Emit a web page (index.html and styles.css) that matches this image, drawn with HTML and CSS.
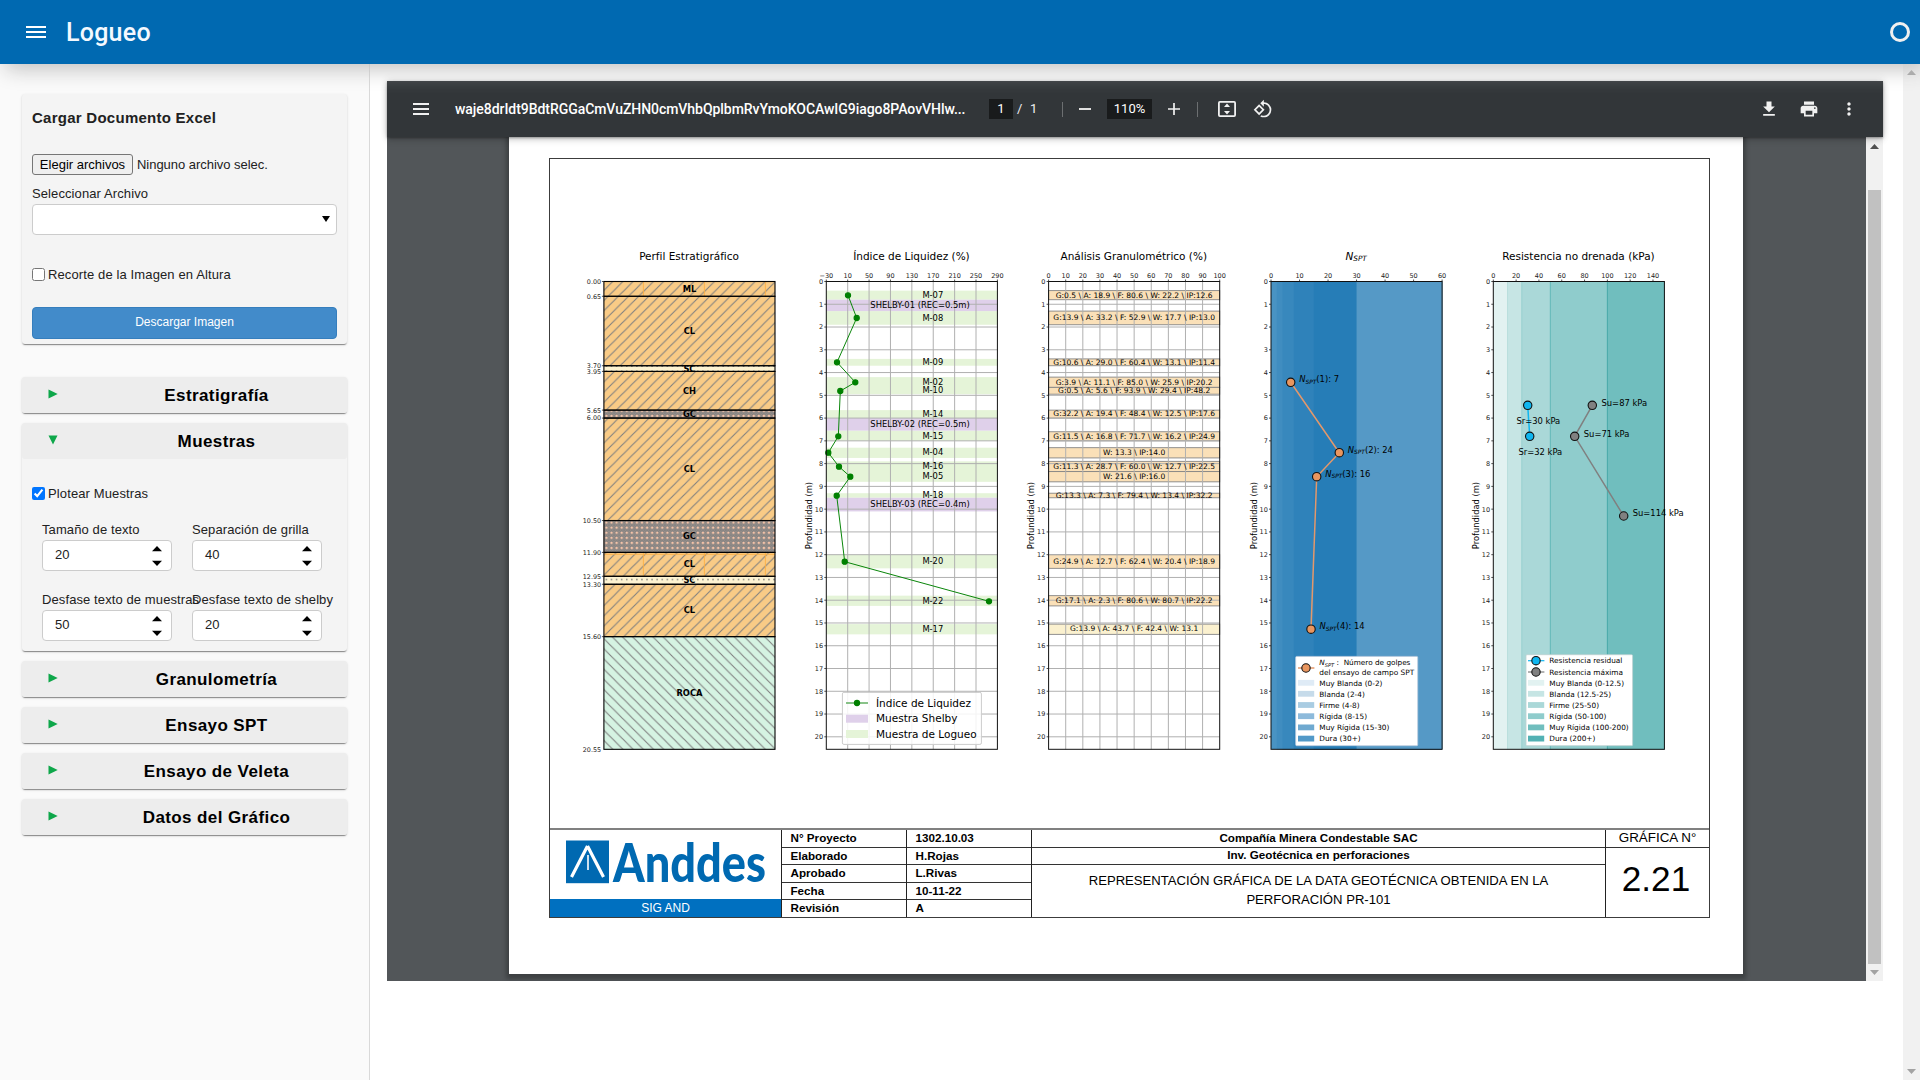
FILE: index.html
```html
<!DOCTYPE html>
<html lang="es">
<head>
<meta charset="utf-8">
<title>Logueo</title>
<link rel="stylesheet" href="styles.css">
</head>
<body>
<header class="topbar">
  <svg class="menu" width="20" height="12" viewBox="0 0 20 12"><path d="M0 1h20M0 6h20M0 11h20" stroke="#fff" stroke-width="2"/></svg>
  <h1 class="brand">Logueo</h1>
  <span class="busy"></span>
</header>
<div class="layout">
  <aside class="sidebar">
    <section class="card upload">
      <h2 class="card-title">Cargar Documento Excel</h2>
      <div class="file"><button class="file-btn">Elegir archivos</button><span>Ninguno archivo selec.</span></div>
      <label class="label">Seleccionar Archivo</label>
      <div class="select"><svg width="8" height="6" viewBox="0 0 8 6"><path d="M0 0h8L4 6z"/></svg></div>
      <label class="check"><input type="checkbox">Recorte de la Imagen en Altura</label>
      <button class="download">Descargar Imagen</button>
    </section>
    <section class="card fold"><div class="fold-head"><svg class="tri" width="10" height="10" viewBox="0 0 10 10"><path d="M.5.5 9.7 5 .5 9.5z"/></svg><h3>Estratigrafía</h3></div></section>
    <section class="card fold">
      <div class="fold-head"><svg class="tri" width="10" height="10" viewBox="0 0 10 10"><path d="M.5.5h9L5 9.5z"/></svg><h3>Muestras</h3></div>
      <div class="fold-body">
        <label class="check"><input type="checkbox" checked>Plotear Muestras</label>
        <div class="fields">
          <div class="field"><label class="label">Tamaño de texto</label><div class="num">20<svg width="10" height="20" viewBox="0 0 10 20"><path d="M0 5.3 5 0l5 5.3zM0 14.7h10L5 20z"/></svg></div></div>
          <div class="field"><label class="label">Separación de grilla</label><div class="num">40<svg width="10" height="20" viewBox="0 0 10 20"><path d="M0 5.3 5 0l5 5.3zM0 14.7h10L5 20z"/></svg></div></div>
          <div class="field"><label class="label">Desfase texto de muestras</label><div class="num">50<svg width="10" height="20" viewBox="0 0 10 20"><path d="M0 5.3 5 0l5 5.3zM0 14.7h10L5 20z"/></svg></div></div>
          <div class="field"><label class="label">Desfase texto de shelby</label><div class="num">20<svg width="10" height="20" viewBox="0 0 10 20"><path d="M0 5.3 5 0l5 5.3zM0 14.7h10L5 20z"/></svg></div></div>
        </div>
      </div>
    </section>
    <section class="card fold"><div class="fold-head"><svg class="tri" width="10" height="10" viewBox="0 0 10 10"><path d="M.5.5 9.7 5 .5 9.5z"/></svg><h3>Granulometría</h3></div></section>
    <section class="card fold"><div class="fold-head"><svg class="tri" width="10" height="10" viewBox="0 0 10 10"><path d="M.5.5 9.7 5 .5 9.5z"/></svg><h3>Ensayo SPT</h3></div></section>
    <section class="card fold"><div class="fold-head"><svg class="tri" width="10" height="10" viewBox="0 0 10 10"><path d="M.5.5 9.7 5 .5 9.5z"/></svg><h3>Ensayo de Veleta</h3></div></section>
    <section class="card fold"><div class="fold-head"><svg class="tri" width="10" height="10" viewBox="0 0 10 10"><path d="M.5.5 9.7 5 .5 9.5z"/></svg><h3>Datos del Gráfico</h3></div></section>
  </aside>
  <main class="main">
    <div class="viewer">
      <div class="toolbar">
        <svg class="t-menu" width="16" height="12" viewBox="0 0 16 12"><path d="M0 1h16M0 6h16M0 11h16" stroke="#f1f1f1" stroke-width="2"/></svg>
        <span class="filename">waje8drIdt9BdtRGGaCmVuZHN0cmVhbQplbmRvYmoKOCAwIG9iago8PAovVHlw...</span>
        <span class="box page-no">1</span><span class="slash">/</span><span class="total">1</span>
        <span class="sep"></span>
        <svg class="minus" width="12" height="12" viewBox="0 0 12 12"><path d="M0 6h12" stroke="#e0e0e0" stroke-width="2"/></svg>
        <span class="box zoom">110%</span>
        <svg class="plus" width="12" height="12" viewBox="0 0 12 12"><path d="M0 6h12M6 0v12" stroke="#f1f1f1" stroke-width="1.7"/></svg>
        <span class="sep sep2"></span>
        <svg class="fit" width="18" height="16" viewBox="0 0 18 16"><rect x=".9" y=".9" width="16.2" height="14.2" rx="1" fill="none" stroke="#f1f1f1" stroke-width="1.8"/><path d="M9 2.6l3 3.4H6zM9 13.4l3-3.4H6z" fill="#f1f1f1"/></svg>
        <svg class="rotate" width="20" height="20" viewBox="0 0 24 24"><path fill="#f1f1f1" d="M7.34 6.41L.86 12.9l6.49 6.48 6.49-6.48-6.5-6.49zM3.69 12.9l3.66-3.66L11 12.9l-3.66 3.66-3.65-3.66zm15.67-6.26C17.61 4.88 15.3 4 13 4V.76L8.76 5 13 9.24V6c1.79 0 3.58.68 4.95 2.05a7.007 7.007 0 0 1 0 9.9 6.973 6.973 0 0 1-7.79 1.44l-1.49 1.49C10.02 21.62 11.51 22 13 22c2.3 0 4.61-.88 6.36-2.64a8.98 8.98 0 0 0 0-12.72z"/></svg>
        <span class="grow"></span>
        <svg width="20" height="20" viewBox="0 0 24 24"><path fill="#f1f1f1" d="M19 9h-4V3H9v6H5l7 7 7-7zM5 18v2h14v-2H5z"/></svg>
        <svg width="20" height="20" viewBox="0 0 24 24"><path fill="#f1f1f1" d="M19 8H5c-1.66 0-3 1.34-3 3v6h4v4h12v-4h4v-6c0-1.66-1.34-3-3-3zm-3 11H8v-5h8v5zm3-7c-.55 0-1-.45-1-1s.45-1 1-1 1 .45 1 1-.45 1-1 1zm-1-9H6v4h12V3z"/></svg>
        <svg width="20" height="20" viewBox="0 0 24 24"><path fill="#f1f1f1" d="M12 8c1.1 0 2-.9 2-2s-.9-2-2-2-2 .9-2 2 .9 2 2 2zm0 2c-1.1 0-2 .9-2 2s.9 2 2 2 2-.9 2-2-.9-2-2-2zm0 6c-1.1 0-2 .9-2 2s.9 2 2 2 2-.9 2-2-.9-2-2-2z"/></svg>
      </div>
      <div class="canvas">
        <div class="sheet">
          <div class="frame">
            <svg id="charts" class="charts" width="1159" height="669" viewBox="550 159 1159 669"></svg>
            <div class="titleblock">
              <div class="logo-cell">
                <svg class="logo" width="231" height="69" viewBox="550 830 231 69">
                  <rect x="566" y="840.5" width="43" height="42.7" fill="#0069b1"/>
                  <path d="M587.5 846 571.5 877M587.5 846 603.5 877" stroke="#fff" stroke-width="3.2" fill="none"/><path d="M588 855v15" stroke="#fff" stroke-width="1.6"/>
                  <text x="613" y="881.7" textLength="153" lengthAdjust="spacingAndGlyphs" class="logo-text">Anddes</text>
                </svg>
                <div class="sig">SIG AND</div>
              </div>
              <div class="kv"><b>N° Proyecto</b><b>Elaborado</b><b>Aprobado</b><b>Fecha</b><b>Revisión</b></div>
              <div class="kv"><b>1302.10.03</b><b>H.Rojas</b><b>L.Rivas</b><b>10-11-22</b><b>A</b></div>
              <div class="project"><b>Compañía Minera Condestable SAC</b><b>Inv. Geotécnica en perforaciones</b><p>REPRESENTACIÓN GRÁFICA DE LA DATA GEOTÉCNICA OBTENIDA EN LA<br>PERFORACIÓN PR-101</p></div>
              <div class="figure"><span class="fig-label">GRÁFICA N°</span><span class="fig-no">2.21</span></div>
            </div>
          </div>
        </div>
        <div class="vscroll"><svg width="9" height="5" viewBox="0 0 9 5"><path d="M0 5 4.5 0 9 5z" fill="#505050"/></svg><span class="thumb"></span><svg width="9" height="5" viewBox="0 0 9 5"><path d="M0 0h9L4.500 5z" fill="#a3a3a3"/></svg></div>
      </div>
    </div>
  </main>
  <div class="pagescroll"><svg width="9" height="5" viewBox="0 0 9 5"><path d="M0 5 4.500 0 9 5z" fill="#a3a3a3"/></svg><svg width="9" height="5" viewBox="0 0 9 5"><path d="M0 0h9L4.500 5z" fill="#a3a3a3"/></svg></div>
</div>
<script src="charts.js"></script>
</body>
</html>
```
FILE: styles.css
```css
* { box-sizing: border-box; }
body { margin: 0; height: 1080px; overflow: hidden; background: #fff; font-family: "Liberation Sans", Arial, sans-serif; font-size: 13px; color: #212121; display: flex; flex-direction: column; }
h1, h2, h3, p { margin: 0; }
svg { display: block; flex: none; }

.topbar { height: 64px; flex: none; background: #0069b1; display: flex; align-items: center; padding: 0 10px 0 26px; position: relative; z-index: 5; box-shadow: 5px 5px 20px silver; }
.brand { font: 500 25px/28px Roboto, sans-serif; letter-spacing: .25px; color: #f4f9ff; margin: 1px 0 0 20px; }
.busy { margin-left: auto; width: 20px; height: 20px; border: 3px solid #f0f0f0; border-radius: 50%; }

.layout { flex: 1; display: flex; min-height: 0; }
.sidebar { width: 370px; flex: none; background: #fafafa; border-right: 1px solid #d9d9d9; padding: 30px 22px 0; }
.card { width: 325px; background: #f4f4f4; border-radius: 3px; box-shadow: 0 2px 1px -1px rgba(0,0,0,.3), 0 1px 1px rgba(0,0,0,.14), 0 1px 3px rgba(0,0,0,.12); }
.upload { height: 250px; margin-bottom: 33px; padding: 15px 10px 5px; display: flex; flex-direction: column; }
.card-title { font-size: 15px; line-height: 18px; letter-spacing: .26px; color: #212121; }
.file { display: flex; align-items: center; gap: 4px; margin-top: 27px; height: 21px; letter-spacing: -.03px; }
.file-btn { width: 101px; height: 21px; padding: 0; border: 1px solid #767676; border-radius: 3px; background: #efefef; font: 13px "Liberation Sans", sans-serif; color: #000; }
.label { display: block; line-height: 15px; letter-spacing: .1px; white-space: nowrap; }
.upload .label { margin-top: 11px; }
.select { height: 31px; margin-top: 3px; border: 1px solid #ccc; border-radius: 4px; background: #fff; display: flex; justify-content: flex-end; align-items: center; padding: 0 6px 2px 0; }
.check { display: flex; align-items: center; gap: 3px; height: 15px; letter-spacing: .12px; }
.check input { width: 13px; height: 13px; margin: 0; }
.upload .check { margin-top: 32px; }
.download { height: 32px; margin-top: 25px; border: 1px solid #357ebd; border-radius: 4px; background: #428bca; color: #fff; font: 12px "Liberation Sans", sans-serif; padding: 0 0 3px; }

.fold { margin-bottom: 10px; }
.fold-head { height: 36px; background: #ededed; border-radius: 3px; display: grid; grid-template-columns: 63px 1fr; align-items: center; justify-items: center; }
.fold-head h3 { font-size: 17px; line-height: 20px; letter-spacing: .4px; color: #000; padding: 1px 0 0 1px; }
.tri { fill: #0ea74a; margin-bottom: 2px; margin-right: 1px; }
.fold-body { height: 192px; padding: 27px 10px 0; }
.fields { display: grid; grid-template-columns: 130px 130px; column-gap: 20px; row-gap: 20px; padding: 21px 10px 0; }
.field { height: 50px; }
.num { margin-top: 3px; height: 31px; border: 1px solid #ccc; border-radius: 4px; background: #fff; display: flex; align-items: center; justify-content: space-between; padding: 0 9px 2px 12px; color: #222; }
.num svg { position: relative; top: 1px; }

.main { flex: 1; min-width: 0; padding: 17px 0 0 17px; }
.viewer { width: 1496px; height: 900px; background: #525659; display: flex; flex-direction: column; }
.toolbar { height: 56px; flex: none; background: #323639; display: flex; align-items: center; padding: 0 24px 0 26px; color: #f1f1f1; font: 13px/20px Roboto, sans-serif; position: relative; z-index: 2; box-shadow: 0 -2px 8px rgba(0,0,0,.09), 0 4px 8px rgba(0,0,0,.06), 0 1px 2px rgba(0,0,0,.3), 0 2px 6px rgba(0,0,0,.15); }
.filename { margin-left: 26px; width: 534px; font-size: 14px; letter-spacing: -.05px; font-weight: 500; color: #fff; white-space: nowrap; }
.box { height: 20px; background: #191b1c; text-align: center; color: #fff; flex: none; }
.page-no { width: 24px; }
.slash { width: 17px; padding-left: 4px; }
.total { width: 10px; }
.sep { width: 1px; height: 15px; background: #6c6f71; margin: 0 16px 0 22px; }
.zoom { width: 45px; margin: 0 16px; }
.sep2 { margin: 0 20px 0 17px; }
.rotate { margin-left: 17px; }
.grow { flex: 1; }
.grow ~ svg { margin-left: 20px; }
.toolbar .grow + svg { margin-left: 0; }

.canvas { flex: 1; min-height: 0; display: flex; overflow: hidden; }
.sheet { width: 1234px; height: 837px; margin-left: 122px; flex: none; background: #fff; padding: 21px 33px 0 40px; box-shadow: 0 2px 4px 3px rgba(0,0,0,.25); }
.frame { width: 1161px; height: 760px; border: 1px solid #3c3c3c; display: flex; flex-direction: column; }
.charts { overflow: visible; font-family: "DejaVu Sans", sans-serif; }
.titleblock { height: 89px; flex: none; border-top: 2px solid #808080; display: grid; grid-template-columns: 232px 125px 125px 574px 1fr; color: #000; }
.titleblock > div { display: flex; flex-direction: column; }
.titleblock > div:not(:last-child) { border-right: 1px solid #222; }
.logo { overflow: visible; }
.logo-text { font-family: Lato, sans-serif; font-weight: 900; font-size: 53px; fill: #0069b1; }
.sig { height: 18px; line-height: 18px; background: #0070c0; color: #fff; font-size: 12px; text-align: center; }
.kv { display: grid !important; grid-template-rows: 18px 17px 18px 17px 17px; }
.kv b { padding-left: 8.5px; font-size: 11.67px; line-height: 15px; border-bottom: 1px solid #333; }
.kv b:last-child { border-bottom: 0; }
.project { text-align: center; }
.project b { font-size: 11.67px; line-height: 14px; height: 17px; border-bottom: 1px solid #333; }
.project b:first-child { height: 18px; line-height: 15px; }
.project p { font-size: 13.12px; line-height: 19px; padding-top: 6px; }
.figure { text-align: center; }
.fig-label { font-size: 13.4px; height: 18px; line-height: 16px; border-bottom: 1px solid #333; }
.fig-no { font-size: 35.2px; line-height: 40px; margin: 11px 3px 0 0; }

.vscroll { width: 17px; margin-left: auto; background: #f1f1f1; display: flex; flex-direction: column; align-items: center; padding: 7px 0 6px; }
.thumb { width: 13px; flex: 1; margin: 41px 0 6px; background: #c1c1c1; }
.pagescroll { width: 17px; background: #f1f1f1; display: flex; flex-direction: column; justify-content: space-between; align-items: center; padding: 6px 0; }
```
FILE: charts.js
```js
const svg = document.getElementById('charts');
const out = [];
const TOP = 281.5, PX = 22.765, BOTTOM = 749.3, W = 171.1;
const X = [603.9, 826.3, 1048.6, 1271, 1493.3];
const y = d => TOP + d * PX;

const rect = (x, yy, w, h, fill, extra = '') => out.push(`<rect x="${x}" y="${yy}" width="${w}" height="${h}" fill="${fill}" ${extra}/>`);
const line = (x1, y1, x2, y2, c, w = 1) => out.push(`<line x1="${x1}" y1="${y1}" x2="${x2}" y2="${y2}" stroke="${c}" stroke-width="${w}"/>`);
const text = (x, yy, s, size, anchor = 'middle', extra = '') => out.push(`<text x="${x}" y="${yy}" font-size="${size}" text-anchor="${anchor}" ${extra}>${s}</text>`);
const dot = (x, yy, fill, r = 4.2, stroke = '#111') => out.push(`<circle cx="${x}" cy="${yy}" r="${r}" fill="${fill}" stroke="${stroke}" stroke-width="1.1"/>`);
const poly = (pts, c, w) => out.push(`<polyline points="${pts.map(p => p.join()).join(' ')}" fill="none" stroke="${c}" stroke-width="${w}"/>`);
const nspt = rest => `<tspan font-style="italic">N</tspan><tspan font-style="italic" font-size="70%" dy="1.2">SPT</tspan><tspan dy="-1.2">${rest}</tspan>`;

out.push(`<defs>
<pattern id="up" x="643.3" y="281.5" width="10.17" height="10.17" patternUnits="userSpaceOnUse"><path d="M-2 12.17 12.17-2M-2 2 2-2M8.17 12.17l4-4" stroke="#808080" stroke-width="1.1"/></pattern>
<pattern id="down" x="643.3" y="281.5" width="10.17" height="10.17" patternUnits="userSpaceOnUse"><path d="M-2-2 12.17 12.17M-2 8.17l4 4M8.17-2l4 4" stroke="#808080" stroke-width="1.1"/></pattern>
<pattern id="rings" x="603.9" y="520" width="5.08" height="5.08" patternUnits="userSpaceOnUse"><rect width="5.08" height="5.08" fill="#c9a896"/><circle cx="2.54" cy="2.54" r="1.9" fill="#f5c3a8" stroke="#808080" stroke-width="1.1"/><circle cx="0" cy="0" r="1.2" fill="#858585"/><circle cx="5.08" cy="0" r="1.2" fill="#858585"/><circle cx="0" cy="5.08" r="1.2" fill="#858585"/><circle cx="5.08" cy="5.08" r="1.2" fill="#858585"/></pattern>
<pattern id="dots" x="603.9" y="577" width="5.08" height="5.08" patternUnits="userSpaceOnUse"><circle cx="2.5" cy="2.5" r=".8" fill="#777"/></pattern>
</defs>`);

['Perfil Estratigráfico', 'Índice de Liquidez (%)', 'Análisis Granulométrico (%)', nspt(''), 'Resistencia no drenada (kPa)']
  .forEach((t, i) => text(X[i] + W / 2 - .4, 260.2, t, 10.5));

/* Perfil estratigráfico */
const layers = [
  [0, .65, 'ML', '#f9cb86', 'up'], [.65, 3.7, 'CL', '#f9cb86', 'up'], [3.7, 3.95, 'SC', '#fdf3d2', 'dots'],
  [3.95, 5.65, 'CH', '#f9cb86', 'up'], [5.65, 6, 'GC', '#f5c3a8', 'rings'], [6, 10.5, 'CL', '#f9cb86', 'up'],
  [10.5, 11.9, 'GC', '#f5c3a8', 'rings'], [11.9, 12.95, 'CL', '#f9cb86', 'up'], [12.95, 13.3, 'SC', '#fdf3d2', 'dots'],
  [13.3, 15.6, 'CL', '#f9cb86', 'up'], [15.6, 20.55, 'ROCA', '#d5f3e2', 'down']];
for (const [a, b, name, fill, hatch] of layers) {
  const h = (b - a) * PX;
  rect(X[0], y(a), W, h, fill);
  rect(X[0], y(a), W, h, `url(#${hatch})`);
}
for (const [a, b] of [[0, .65], [11.9, 12.95]])
  for (const x of [643.4, 704.4, 765.4]) line(x, y(a), x, y(b), '#fdb045', .9);
line(X[0], 554.3, X[0] + W, 554.3, '#fdb045', .9);
for (const [a, b, name] of layers) {
  rect(X[0], y(a), W, (b - a) * PX, 'none', 'stroke="#000" stroke-width="1.1"');
  text(X[0] + W / 2, y((a + b) / 2) + 3, name, 8.34, 'middle', 'font-weight="bold"');
  line(X[0] - 2, y(a), X[0], y(a), '#222', .8);
  text(X[0] - 2.8, y(a) + 2.4, a.toFixed(2), 6.4, 'end', 'fill="#222"');
}
text(X[0] - 2.8, y(20.55) + 2.4, '20.55', 6.4, 'end', 'fill="#222"');

/* Ejes comunes */
function grid(i, n) {
  for (let k = 1; k < n; k++) line(X[i] + W * k / n, TOP, X[i] + W * k / n, BOTTOM, '#b0b0b0', 1);
  for (let d = 1; d <= 20; d++) line(X[i], y(d), X[i] + W, y(d), '#b0b0b0', 1);
}
function axes(i, labels, step) {
  rect(X[i], TOP, W, BOTTOM - TOP, 'none', 'stroke="#111" stroke-width="1"');
  for (let d = 0; d <= 20; d++) {
    line(X[i] - 2, y(d), X[i], y(d), '#222', .8);
    text(X[i] - 3.2, y(d) + 2.4, d, 6.5, 'end', 'fill="#222"');
  }
  labels.forEach((l, k) => {
    line(X[i] + k * step, TOP - 2, X[i] + k * step, TOP, '#222', .8);
    text(X[i] + k * step, 277.7, l, 6.5, 'middle', 'fill="#222"');
  });
  text(0, 0, 'Profundidad (m)', 8.34, 'middle', `transform="translate(${X[i] - 14.4} 515.5) rotate(-90)"`);
}

/* Índice de liquidez */
const green = '#e5f4d8', violet = '#dfd0ea';
[[.4, .8], [1.3, 1.9], [3.4, 3.7], [4.2, 4.95], [5.65, 6], [6.55, 7], [7.3, 7.75], [7.9, 8.8], [9.3, 9.5], [12, 12.6], [13.8, 14.25], [15.05, 15.5]]
  .forEach(([a, b]) => rect(X[1], y(a), W, (b - a) * PX, green));
[[.8, 1.3], [6, 6.55], [9.5, 10.1]].forEach(([a, b]) => rect(X[1], y(a), W, (b - a) * PX, violet));
grid(1, 8);
const li = [[848, 295.3], [856.7, 318], [837, 362.3], [855.3, 382.3], [840.3, 391], [838.3, 436.3], [828.3, 452.7], [839, 466.7], [850.3, 476.7], [836.7, 495.7], [844.7, 561.7], [989, 601.3]];
poly(li, '#0a860a', 1);
li.forEach(p => dot(p[0], p[1], '#008000', 2.6, '#008000'));
[['07', 295], ['08', 317.6], ['09', 362], ['02', 382], ['10', 390.4], ['14', 413.6], ['15', 436], ['04', 452.4], ['16', 466.4], ['05', 476.4], ['18', 495], ['20', 561], ['22', 600.6], ['17', 628.6]]
  .forEach(([n, c]) => text(932.8, c + 3, 'M-' + n, 8.34));
[['01', '0.5', 305], ['02', '0.5', 424.4], ['03', '0.4', 504]].forEach(([n, r, c]) => text(920, c + 3, `SHELBY-${n} (REC=${r}m)`, 8.4));
rect(842.4, 692.4, 139, 52, '#fff', 'fill-opacity=".85" stroke="#ccc" rx="1.5"');
line(846, 703, 868, 703, '#3a9a3a', 1.2); dot(857, 703, '#008000', 2.6, '#008000');
rect(846, 714.7, 22, 8, violet); rect(846, 730, 22, 8, green);
text(876, 706.6, 'Índice de Liquidez', 10.5, 'start');
text(876, 722.1, 'Muestra Shelby', 10.5, 'start');
text(876, 737.6, 'Muestra de Logueo', 10.5, 'start');
axes(1, ['−30', 10, 50, 90, 130, 170, 210, 250, 290], W / 8);

/* Análisis granulométrico */
const gran = [
  [.4, .8, 295, 'G:0.5 \\ A: 18.9 \\ F: 80.6 \\ W: 22.2 \\ IP:12.6'], [1.3, 1.9, 317.6, 'G:13.9 \\ A: 33.2 \\ F: 52.9 \\ W: 17.7 \\ IP:13.0'],
  [3.4, 3.7, 362, 'G:10.6 \\ A: 29.0 \\ F: 60.4 \\ W: 13.1 \\ IP:11.4'], [4.2, 4.65, 382, 'G:3.9 \\ A: 11.1 \\ F: 85.0 \\ W: 25.9 \\ IP:20.2'],
  [4.65, 4.95, 390.4, 'G:0.5 \\ A: 5.6 \\ F: 93.9 \\ W: 29.4 \\ IP:48.2'], [5.65, 6, 413.6, 'G:32.2 \\ A: 19.4 \\ F: 48.4 \\ W: 12.5 \\ IP:17.6'],
  [6.6, 7, 436, 'G:11.5 \\ A: 16.8 \\ F: 71.7 \\ W: 16.2 \\ IP:24.9'], [7.3, 7.75, 452.4, 'W: 13.3 \\ IP:14.0'],
  [7.9, 8.35, 466.4, 'G:11.3 \\ A: 28.7 \\ F: 60.0 \\ W: 12.7 \\ IP:22.5'], [8.35, 8.8, 476.4, 'W: 21.6 \\ IP:16.0'],
  [9.3, 9.5, 495, 'G:13.3 \\ A: 7.3 \\ F: 79.4 \\ W: 13.4 \\ IP:32.2'], [12, 12.6, 561, 'G:24.9 \\ A: 12.7 \\ F: 62.4 \\ W: 20.4 \\ IP:18.9'],
  [13.8, 14.25, 600.6, 'G:17.1 \\ A: 2.3 \\ F: 80.6 \\ W: 80.7 \\ IP:22.2'], [15.05, 15.5, 628.6, 'G:13.9 \\ A: 43.7 \\ F: 42.4 \\ W: 13.1']];
gran.forEach(([a, b], k) => rect(X[2], y(a), W, (b - a) * PX, k === 13 ? '#fbf1cf' : '#fae0b8', 'stroke="#858585" stroke-width=".9"'));
grid(2, 10);
gran.forEach(([a, b, c, s]) => text(X[2] + W / 2, c + 2.7, s, 7.55));
axes(2, [0, 10, 20, 30, 40, 50, 60, 70, 80, 90, 100], W / 10);

/* Ensayo SPT: cada banda se prolonga bajo la siguiente para no dejar juntas */
const H = BOTTOM - TOP;
[[0, '#4993c3'], [2, '#408dc0'], [4, '#3888bd'], [8, '#2f82ba'], [15, '#267db7'], [30, '#5599c6']]
  .forEach(([a, c]) => rect(X[3] + a * W / 60, TOP, (60 - a) * W / 60, H, c));
const spt = [[1290.7, 382.3], [1339.3, 452.7], [1316.7, 476.7], [1311, 629.2]];
poly(spt, '#e3986b', 1.5);
spt.forEach(p => dot(p[0], p[1], '#e9965f'));
[7, 24, 16, 14].forEach((n, i) => text(spt[i][0] + 8.5, spt[i][1] + .1, nspt(`(${i + 1}): ${n}`), 8.4, 'start'));
rect(1295.7, 656.4, 122, 89.3, '#fff', 'stroke="#bcd" stroke-width=".8" rx="1"');
line(1298, 668, 1314.400, 668, '#e3986b', 1.5); dot(1306, 668, '#e9965f');
text(1319.3, 665.4, nspt('&#160;:&#160; Número de golpes'), 7.3, 'start');
text(1319.3, 674.6, 'del ensayo de campo SPT', 7.38, 'start');
axes(3, [0, 10, 20, 30, 40, 50, 60], W / 6);

/* Resistencia no drenada */
const teal = ['#e2f2f1', '#c6e5e4', '#aad8d8', '#8fcccc', '#70bebe', '#52b1b4'];
[0, 12.5, 25, 50, 100].forEach((a, k) => rect(X[4] + a * W / 150, TOP, (150 - a) * W / 150, H, teal[k]));
[[12.5, '#b9dfdd'], [25, '#98d0cf'], [50, '#62b8b8'], [100, '#47a8a8']].forEach(([v, c]) => line(X[4] + v * W / 150, TOP, X[4] + v * W / 150, BOTTOM, c, 1));
const sr = [[1527.7, 405.3], [1529.7, 436.3]], su = [[1592.3, 405.3], [1574.7, 436.3], [1623.7, 516]];
poly(sr, '#0fb6f0', 1.5); poly(su, '#808080', 1.5);
sr.forEach(p => dot(p[0], p[1], '#0fb6f0')); su.forEach(p => dot(p[0], p[1], '#808080'));
axes(4, [0, 20, 40, 60, 80, 100, 120, 140], W / 7.5);
[[1601.5, 406, 'Su=87 kPa'], [1583.8, 436.6, 'Su=71 kPa'], [1632.7, 516.3, 'Su=114 kPa'], [1516.5, 424, 'Sr=30 kPa'], [1518.5, 454.7, 'Sr=32 kPa']]
  .forEach(([a, b, s]) => text(a, b, s, 8.4, 'start'));
rect(1526, 654.700, 106.6, 91, '#fff', 'stroke="#bdd0d0" stroke-width=".8" rx="1"');
line(1528, 660.7, 1544.4, 660.7, '#0fb6f0', 1.2); dot(1536, 660.7, '#0fb6f0');
line(1528, 672, 1544.4, 672, '#808080', 1.2); dot(1536, 672, '#808080');
text(1549.3, 663.4, 'Resistencia residual', 7.35, 'start');
text(1549.3, 674.6, 'Resistencia máxima', 7.35, 'start');

/* Filas de leyenda compartidas */
const rows = [682.8, 693.8, 705, 716.2, 727.4, 738.6];
const blue = ['#dfebf6', '#c6dbea', '#a9cce2', '#8dbadb', '#6fa9d0', '#5199c8'];
['Muy Blanda (0-2)', 'Blanda (2-4)', 'Firme (4-8)', 'Rígida (8-15)', 'Muy Rígida (15-30)', 'Dura (30+)'].forEach((s, i) => {
  rect(1298, rows[i] - 2.9, 16.2, 5.8, blue[i]); text(1319.3, rows[i] + 2.7, s, 7.35, 'start');
});
['Muy Blanda (0-12.5)', 'Blanda (12.5-25)', 'Firme (25-50)', 'Rígida (50-100)', 'Muy Rígida (100-200)', 'Dura (200+)'].forEach((s, i) => {
  rect(1528, rows[i] - 2.9, 16.2, 5.8, teal[i]); text(1549.3, rows[i] + 2.7, s, 7.35, 'start');
});
svg.innerHTML = out.join('');
```
